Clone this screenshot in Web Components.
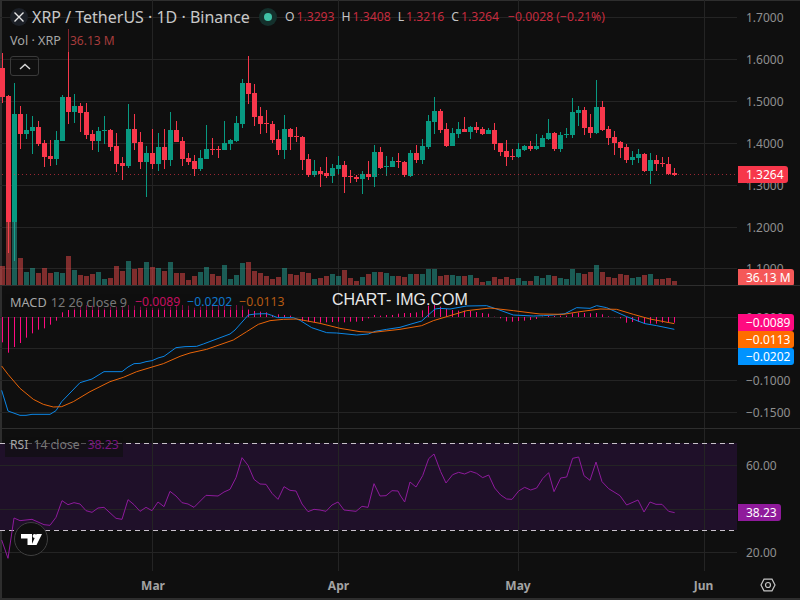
<!DOCTYPE html>
<html><head><meta charset="utf-8"><title>XRP / TetherUS</title>
<style>html,body{margin:0;padding:0;background:#0f0f0f;width:800px;height:600px;overflow:hidden}</style>
</head><body>
<chart-app></chart-app>
<script>
const FONT = '"Noto Sans","Open Sans",sans-serif';
const NS = 'http://www.w3.org/2000/svg';
const PLOT_W = 737;
const cx = i => Math.floor(2.67 + 6 * i) + 0.5;
const RED = '#f7374b', GREEN = '#089981';
// [color, high, top, bottom, low, volumeTop]
const C = `r 53 68 97 103 266|r 95 96 222 253 222|g 83 114 222 261 222|r 106 114 134 149 258|g 114 130 134 139 272|g 116 127 131 154 268|r 121 127 144 146 273|r 140 143 157 167 268|r 140 156 159 166 273|g 131 140 159 165 272|g 95 97 141 141 273|r 29 97 112 124 256|g 94 106 112 123 270|r 103 106 113 132 275|r 103 112 135 139 276|r 130 134 141 150 274|g 127 131 141 152 272|g 116 130 131 144 279|r 129 130 147 151 278|r 133 146 164 172 266|r 157 163 166 180 271|g 104 129 166 168 261|r 114 129 143 150 269|r 132 142 162 169 268|g 146 153 162 197 262|r 129 153 164 169 267|g 133 147 164 171 268|r 129 147 160 169 271|g 112 130 160 166 262|r 121 130 142 142 273|r 137 141 159 166 273|r 153 158 162 165 280|r 155 161 169 176 276|g 150 158 169 171 272|g 125 149 159 159 267|r 138 149 150 155 274|r 146 149 150 158 276|g 121 143 150 150 265|g 139 140 144 150 279|g 116 123 141 142 275|g 79 83 124 128 263|r 56 83 94 104 262|r 84 93 117 126 271|r 107 116 124 134 273|r 110 123 124 133 276|r 121 124 140 143 279|r 130 139 150 155 277|g 115 129 150 159 268|r 128 129 137 150 274|r 127 136 137 142 275|r 136 137 160 170 272|r 154 159 175 177 273|g 160 171 175 177 279|r 167 171 174 187 278|r 157 173 176 178 276|g 164 168 176 183 274|g 156 165 169 174 276|r 161 165 177 193 270|r 170 176 177 183 278|r 175 177 179 182 281|g 171 174 179 194 277|r 161 174 177 180 274|g 145 152 177 187 272|r 147 152 168 169 272|g 156 166 167 176 273|g 157 161 167 167 276|r 153 161 162 168 276|r 161 162 175 177 277|g 150 153 176 177 274|r 145 153 160 163 274|g 139 146 160 164 274|g 115 121 147 149 269|g 97 111 122 134 269|r 109 111 130 133 276|r 123 129 146 147 275|g 128 133 146 146 275|g 122 129 134 138 276|r 117 129 132 132 276|g 126 127 132 139 275|r 122 127 130 133 278|r 127 129 134 135 282|g 128 130 134 134 281|r 123 130 144 150 277|r 143 143 152 156 279|r 140 151 157 166 277|r 149 156 157 160 279|g 143 149 157 158 278|g 145 146 150 151 281|r 141 146 149 151 281|g 134 146 149 150 276|g 135 138 147 147 278|g 119 133 139 140 275|r 132 133 149 151 276|g 132 135 149 152 278|g 128 134 135 138 279|g 98 112 135 138 269|g 106 110 113 126 273|r 107 110 128 135 274|r 114 127 133 138 272|g 80 107 133 134 265|r 101 107 130 131 272|r 126 129 138 145 277|r 131 137 143 155 278|r 141 142 148 158 274|r 144 147 160 163 275|g 151 157 160 165 278|g 149 154 158 163 277|r 153 154 171 172 275|g 153 160 171 184 274|r 155 160 164 171 279|r 157 163 164 167 279|r 157 164 174 175 278|r 168 173 175 176 281`
  .split('|').map(s => { const p = s.split(' '); return [p[0], ...p.slice(1).map(Number)]; });
const MH = [172,203,186,174,158,145,134,130,119,107,82,75,70,65,60,62,65,70,65,65,66,60,62,65,68,68,70,68,65,62,60,62,68,65,62,60,60,62,65,60,62,72,78,80,82,90,88,90,92,96,108,110,112,113,112,111,110,112,110,110,108,100,90,92,90,90,86,84,84,82,76,62,60,65,72,75,77,77,78,81,84,86,95,100,109,110,108,107,105,102,95,92,93,92,92,85,83,84,85,84,88,94,97,100,113,111,110,114,116,116,113,113,113];
const z5 = (s,dy) => s.split(' ').map(p => { const [a,b] = p.split(','); return [a/3, b/3 + dy]; });
const z6 = (s,dy) => z5(s,dy).map(([a,b]) => [a + 400, b]);
const BLUE = [...z5('5,316 24,378 60,391 78,391 96,388 150,388 168,377 185,350 240,293 276,282 312,260 366,260 384,246 402,236 420,235 438,230 456,227 474,219 492,214 528,188 555,185 590,184 610,177 690,147 705,135 745,90 765,87 800,86 815,91 833,98 880,98 900,106 935,128 980,143 1010,144 1070,150 1105,147 1125,139 1160,133',-1),...z6('0,127 30,118 65,108 85,90 105,72 120,70 150,72 200,63 260,62 290,72 340,90 400,93 430,92 460,90 495,86 530,68 570,70 590,62 620,68 680,95 735,116 770,122 823,133',-1)];
const ORANGE = [...z5('5,243 24,268 60,310 100,343 130,358 160,366 185,365 220,350 270,320 330,290 370,277 410,260 490,236 540,214 570,204 620,193 700,165 740,140 775,118 810,107 850,103 890,102 960,115 1020,130 1080,140 1120,142',-1),...z6('0,133 65,122 100,107 150,92 200,77 270,69 340,77 420,87 490,88 540,80 600,72 650,73 700,88 750,102 823,116',-1)];
const RSI = [...z5('5,330 24,385 42,264 60,272 96,268 114,276 132,284 150,286 168,262 186,212 204,224 222,218 240,222 258,242 276,247 294,234 312,232 348,265 366,268 384,209 402,224 420,244 438,232 456,242 474,216 492,230 510,184 528,198 546,218 564,222 582,232 618,196 654,198 672,186 690,178 708,143 726,83 744,106 762,148 780,162 798,163 816,190 834,208 852,170 870,181 888,183 906,222 924,245 942,238 960,240 978,244 996,225 1014,216 1032,240 1068,244 1086,229 1104,232 1122,161 1140,198 1158,197 1176,182 1194,183',1),...z6('0,195 14,216 30,156 48,171 68,137 86,86 102,72 122,125 138,159 158,134 176,127 194,132 212,124 230,130 248,143 266,135 284,174 302,195 320,207 336,208 356,183 374,172 392,180 410,174 428,146 446,128 462,185 482,144 500,141 518,85 536,81 552,137 570,151 588,96 606,155 626,176 660,197 680,225 714,210 732,246 750,216 768,223 786,223 806,244 824,248',1)];

function el(tag, attrs, parent) {
  const e = document.createElementNS(NS, tag);
  for (const k in attrs) e.setAttribute(k, attrs[k]);
  if (parent) parent.appendChild(e);
  return e;
}
function vgrid(svg, h) { [152,338,518,704].forEach(x => el('path',{d:`M${x+.5} 0V${h}`,stroke:'#242424','stroke-width':1},svg)); }
function hgrid(svg, ys) { ys.forEach(y => el('path',{d:`M0 ${y+.5}H${PLOT_W}`,stroke:'#242424','stroke-width':1},svg)); }
function rect(svg,x,y,w,h,fill){ return el('rect',{x,y,width:w,height:Math.max(h,1),fill},svg); }
function line(svg, pts, stroke, extra={}) {
  el('polyline',{points:pts.map(p=>p.join(',')).join(' '),fill:'none',stroke,'stroke-width':1,'stroke-linejoin':'round',...extra},svg);
}

class PlotBase extends HTMLElement {
  connectedCallback() {
    const r = this.shadowRoot || this.attachShadow({mode:'open'});
    const h = this.plotHeight;
    r.innerHTML = `<style>:host{display:block;width:${PLOT_W}px;height:${h}px;overflow:hidden}svg{display:block}</style>`;
    const svg = el('svg',{width:PLOT_W,height:h,viewBox:`0 0 ${PLOT_W} ${h}`});
    r.appendChild(svg);
    this.draw(svg);
  }
}
class MainPlot extends PlotBase {
  get plotHeight(){return 285}
  draw(s){
    vgrid(s,285); hgrid(s,[17,59,101,143,185,227,268]);
    C.forEach((c,i)=>{
      const col = c[0]==='r'?RED:GREEN, x=cx(i);
      el('path',{d:`M${x} ${c[1]}V${c[4]}`,stroke:col,'stroke-width':1},s);
      rect(s,x-2.5,c[2],5,c[3]-c[2],col);
    });
    C.forEach((c,i)=>{
      rect(s,cx(i)-2.5,c[5],5,285-c[5],c[0]==='r'?'rgba(240,75,75,.5)':'rgba(40,170,155,.5)');
    });
    el('path',{d:'M2 174.5H737',stroke:RED,'stroke-width':1,'stroke-dasharray':'1 3',opacity:.6},s);
  }
}
class MacdPlot extends PlotBase {
  get plotHeight(){return 142}
  draw(s){
    vgrid(s,142); hgrid(s,[31,62,94,126]);
    MH.forEach((v,i)=>{ const y=v/3-1, b=31; el('path',{d:`M${cx(i)} ${b}V${y}`,stroke:'#ff0a80','stroke-width':1},s); });
    line(s,BLUE,'#0b86e6');
    line(s,ORANGE,'#e86408');
  }
}
class RsiPlot extends PlotBase {
  get plotHeight(){return 142}
  draw(s){
    rect(s,0,14,PLOT_W,87,'#1f1029');
    vgrid(s,142);
    hgrid(s,[36,80,123]);
    el('path',{d:'M0 14.5H737M0 101.5H737',stroke:'#c9c2cb','stroke-width':1,'stroke-dasharray':'5 4'},s);
    line(s,RSI,'#8e1a9c');
  }
}
customElements.define('main-plot',MainPlot);
customElements.define('macd-plot',MacdPlot);
customElements.define('rsi-plot',RsiPlot);

const axisT = document.createElement('template');
axisT.innerHTML = `<style>
:host{display:block;position:relative;width:63px;height:100%;overflow:hidden;font:12px/16px ${FONT};color:#8f8f8f}
::slotted(tick-label){position:absolute}
</style><slot></slot>`;
class PriceAxis extends HTMLElement{constructor(){super();this.attachShadow({mode:'open'}).appendChild(axisT.content.cloneNode(true));}}
customElements.define('price-axis',PriceAxis);

const tickT = document.createElement('template');
tickT.innerHTML = `<style>
:host{display:block;height:16px;left:0;box-sizing:border-box;padding:0 0 0 9px;white-space:nowrap}
:host([filled]){color:#fff;border-radius:0 3px 3px 0;height:17px;line-height:17px;left:1px;padding-left:8px;width:50px}
</style><slot></slot>`;
class TickLabel extends HTMLElement{
  constructor(){super();this.attachShadow({mode:'open'}).appendChild(tickT.content.cloneNode(true));}
  connectedCallback(){
    const filled=this.hasAttribute('filled');
    this.style.top=(+this.getAttribute('at')-(filled?8.5:8))+'px';
    if(filled)this.style.background=this.getAttribute('filled');
    if(this.hasAttribute('w'))this.style.width=this.getAttribute('w')+'px';
  }
}
customElements.define('tick-label',TickLabel);

const paneT = document.createElement('template');
paneT.innerHTML = `<style>
:host{display:grid;grid-template-columns:737px 63px;position:relative;box-sizing:border-box;border-bottom:1px solid #2e2e2e}
</style><slot name="plot"></slot><slot name="axis"></slot><slot></slot>`;
class ChartPane extends HTMLElement{constructor(){super();this.attachShadow({mode:'open'}).appendChild(paneT.content.cloneNode(true));}}
customElements.define('chart-pane',ChartPane);

const legT = document.createElement('template');
legT.innerHTML = `<style>
:host{position:absolute;display:flex;align-items:center;white-space:nowrap;font:12.6px/16px ${FONT};color:#a6a6a6}
</style><slot></slot>`;
class LegendRow extends HTMLElement{constructor(){super();this.attachShadow({mode:'open'}).appendChild(legT.content.cloneNode(true));}}
customElements.define('legend-row',LegendRow);

const appT = document.createElement('template');
appT.innerHTML = `<style>
:host{display:flex;flex-direction:column;width:800px;height:600px;box-sizing:border-box;background:#0f0f0f;position:relative;box-shadow:inset 2px 1px 0 #2e2e2e,inset 0 -2px 0 #2e2e2e;overflow:hidden;font-family:${FONT}}
.m{height:286px}
.s{height:143px}
.title{left:10px;top:8px;font-size:16px;color:#c8c8c8;height:18px}
.sym{width:18px;height:18px;border-radius:50%;background:#1c2027;display:inline-flex;align-items:center;justify-content:center;margin-right:4px}
.dot{width:18px;height:18px;border-radius:50%;background:#14302c;display:inline-flex;align-items:center;justify-content:center;margin-left:9px}
.dot i{display:block;width:8px;height:8px;border-radius:50%;background:#3fc1a6}
.ohlc{display:inline-flex;margin-left:8px;font-size:12.2px;gap:7px;color:#c4c4c4}
.ohlc b{font-weight:400;color:#c42b3e;margin-left:2px}
.vol{left:5px;top:29px;height:23px;padding:1px 6px 0 5px;box-sizing:border-box;background:rgba(15,15,15,.5)}
.vol b{font-weight:400;font-size:12px;color:#a63c3c;margin-left:9px}
.toggle{position:absolute;left:10px;top:56px;width:29px;height:20px;box-sizing:border-box;border:1px solid #3a3a3a;border-radius:3px;display:flex;align-items:center;justify-content:center}
.mleg{left:5px;top:8px;height:16px;padding:0 4px 0 5px;font-size:12.7px;background:rgba(15,15,15,.55)}
.mleg .v{font-size:12.2px;margin-right:7px}
.wm{position:absolute;left:332px;top:4px;font:16px/20px "Liberation Sans",sans-serif;color:#e8e8e8;white-space:pre}
.rleg{left:5px;top:8px;height:20px;padding:0 4px 0 5px;font-size:12.2px;align-items:flex-start;background:rgba(15,15,15,.62)}
.logo{position:absolute;left:14px;top:93px;width:34px;height:34px;border-radius:50%;border:1px solid #3f3f3f;background:#0f0f0f;display:flex;align-items:center;justify-content:center;box-sizing:border-box}
.time{flex:1;position:relative;font:700 12px/16px ${FONT};color:#a3a3a3}
.time span{position:absolute;top:6px;transform:translateX(-50%)}
.gear{position:absolute;left:759px;top:4px}
</style>
<chart-pane class="m" part="main">
  <main-plot slot="plot"></main-plot>
  <price-axis slot="axis">
    <tick-label at="17.5">1.7000</tick-label><tick-label at="59.5">1.6000</tick-label><tick-label at="101.5">1.5000</tick-label><tick-label at="143.5">1.4000</tick-label><tick-label at="185.5">1.3000</tick-label><tick-label at="227.5">1.2000</tick-label><tick-label at="268.5">1.1000</tick-label>
    <tick-label at="174.5" filled="#f7374b">1.3264</tick-label>
    <tick-label at="277" filled="#f55858" w="56">36.13 M</tick-label>
  </price-axis>
  <legend-row class="title">
    <span class="sym"><svg width="12" height="12" viewBox="0 0 12 12"><path d="M1.5 1.5L10.5 10.5M10.5 1.5L1.5 10.5" stroke="#e6e6e6" stroke-width="1.4"/></svg></span>XRP / TetherUS · 1D · Binance<span class="dot"><i></i></span>
    <span class="ohlc"><span>O<b>1.3293</b></span><span>H<b>1.3408</b></span><span>L<b>1.3216</b></span><span>C<b>1.3264</b></span><b>−0.0028 (−0.21%)</b></span>
  </legend-row>
  <legend-row class="vol">Vol · XRP<b>36.13 M</b></legend-row>
  <div class="toggle"><svg width="12" height="7" viewBox="0 0 12 7"><path d="M1 6L6 1.5L11 6" fill="none" stroke="#d8d8d8" stroke-width="1.4"/></svg></div>
</chart-pane>
<chart-pane class="s">
  <macd-plot slot="plot"></macd-plot>
  <price-axis slot="axis">
    <tick-label at="32">0.0000</tick-label><tick-label at="95">−0.1000</tick-label><tick-label at="127">−0.1500</tick-label>
    <tick-label at="36.5" filled="#ff0a80" w="56">−0.0089</tick-label>
    <tick-label at="53.5" filled="#ff6d00" w="56">−0.0113</tick-label>
    <tick-label at="70.5" filled="#0093ff" w="56">−0.0202</tick-label>
  </price-axis>
  <legend-row class="mleg"><span style="margin-right:4px">MACD</span><span style="color:#777;margin-right:8px">12 26 close 9</span><span class="v" style="color:#c50e60">−0.0089</span><span class="v" style="color:#0f78cc">−0.0202</span><span class="v" style="color:#b55a12;margin-right:0">−0.0113</span></legend-row>
  <div class="wm">CHART- IMG.COM</div>
</chart-pane>
<chart-pane class="s" style="border-bottom:0">
  <rsi-plot slot="plot"></rsi-plot>
  <price-axis slot="axis">
    <tick-label at="37">60.00</tick-label><tick-label at="124">20.00</tick-label>
    <tick-label at="83" filled="#8f1a9b" w="43">38.23</tick-label>
  </price-axis>
  <legend-row class="rleg"><span style="margin-right:5px">RSI</span><span style="color:#777;margin-right:8px">14 close</span><span style="color:#79157f">38.23</span></legend-row>
  <div class="logo"><svg width="21" height="11" viewBox="0 0 21 11"><path d="M0 0H11V11H6.5V4.5H0ZM15.5 0H21L15.5 11H10.5Z" fill="#fff"/><circle cx="13.6" cy="2" r="2" fill="#fff"/></svg></div>
</chart-pane>
<div class="time"><span style="left:153px">Mar</span><span style="left:338.5px">Apr</span><span style="left:518px">May</span><span style="left:703.5px">Jun</span>
  <svg class="gear" width="18" height="18" viewBox="0 0 18 18"><path d="M5 3.2H13L16 9L13 14.8H5L2 9Z" fill="none" stroke="#c4c4c4" stroke-width="1.2"/><circle cx="9" cy="9" r="2.5" fill="none" stroke="#c4c4c4" stroke-width="1.2"/></svg>
</div>`;
class ChartApp extends HTMLElement{constructor(){super();this.attachShadow({mode:'open'}).appendChild(appT.content.cloneNode(true));}}
customElements.define('chart-app',ChartApp);
</script>
</body></html>
